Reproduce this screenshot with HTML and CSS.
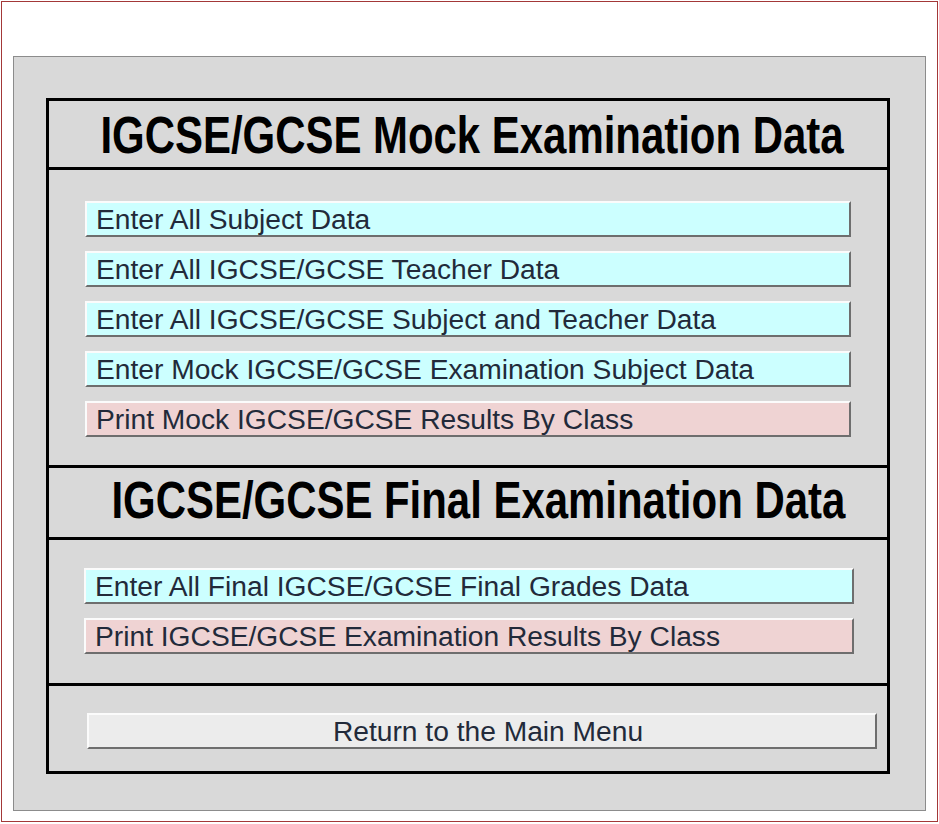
FILE: index.html
```html
<!DOCTYPE html>
<html lang="en">
<head>
<meta charset="utf-8">
<title>IGCSE/GCSE Examination Data</title>
<link rel="stylesheet" href="styles.css">
</head>
<body>
<div class="window">
  <div class="panel">
    <div class="box">
      <div class="head head-mock"><h1><span class="narrow">IGCSE/GCSE Mock Examination Data</span></h1></div>
      <div class="section section-mock">
        <button class="btn btn-enter">Enter All Subject Data</button>
        <button class="btn btn-enter">Enter All IGCSE/GCSE Teacher Data</button>
        <button class="btn btn-enter">Enter All IGCSE/GCSE Subject and Teacher Data</button>
        <button class="btn btn-enter">Enter Mock IGCSE/GCSE Examination Subject Data</button>
        <button class="btn btn-print">Print Mock IGCSE/GCSE Results By Class</button>
      </div>
      <div class="head head-final"><h1><span class="narrow">IGCSE/GCSE Final Examination Data</span></h1></div>
      <div class="section section-final">
        <button class="btn btn-enter">Enter All Final IGCSE/GCSE Final Grades Data</button>
        <button class="btn btn-print">Print IGCSE/GCSE Examination Results By Class</button>
      </div>
      <div class="section section-return">
        <button class="btn btn-return">Return to the Main Menu</button>
      </div>
    </div>
  </div>
</div>
</body>
</html>
```

FILE: styles.css
```css
* { box-sizing: border-box; }

html, body {
  margin: 0;
  padding: 0;
  background: #ffffff;
}

.window {
  margin: 1px;
  width: 937px;
  height: 821px;
  border: 1px solid #a33838;
  padding: 54px 0 0 11px;
  background: #ffffff;
}

.panel {
  width: 913px;
  height: 755px;
  border: 1px solid #8c8c8c;
  background: #d9d9d9;
  padding: 41px 0 0 32px;
}

.box {
  width: 844px;
  height: 676px;
  border: 3px solid #000000;
  display: flex;
  flex-direction: column;
  overflow: hidden;
}

.head {
  border-bottom: 3px solid #000000;
}

.head h1 {
  margin: 0;
  display: flex;
  justify-content: center;
  font-family: "Liberation Sans", Arial, sans-serif;
  font-weight: bold;
  font-size: 51px;
  color: #000000;
  white-space: nowrap;
}

.narrow {
  display: inline-block;
  flex: none;
  transform: scaleX(0.822);
  transform-origin: center;
}

.head-mock {
  height: 69px;
  padding: 4px 0 0 8px;
}
.head-mock h1 { line-height: 62px; }

.head-final {
  height: 72px;
  padding: 0 0 0 20px;
}
.head-final h1 { line-height: 65px; }

.section {
  display: flex;
  flex-direction: column;
  gap: 14px;
  border-bottom: 3px solid #000000;
}

.section-mock {
  height: 298px;
  padding: 31px 36px 0 36px;
}

.section-final {
  height: 146px;
  padding: 28px 33px 0 35px;
}

.section-return {
  flex: 1;
  border-bottom: none;
  padding: 27px 10px 0 38px;
}

.btn {
  display: block;
  width: 100%;
  height: 36px;
  margin: 0;
  padding: 0 0 0 9px;
  border-style: solid;
  border-width: 2px;
  border-color: #fbfbfb #6e6e6e #6e6e6e #fbfbfb;
  font-family: "Liberation Sans", Arial, sans-serif;
  font-size: 28.2px;
  line-height: 33px;
  color: #222a3a;
  text-align: left;
  white-space: nowrap;
  cursor: pointer;
}

.btn-enter { background: #ccffff; }
.btn-print { background: #efd3d3; }
.btn-return {
  background: #ececec;
  text-align: center;
  padding-left: 12px;
}
```
